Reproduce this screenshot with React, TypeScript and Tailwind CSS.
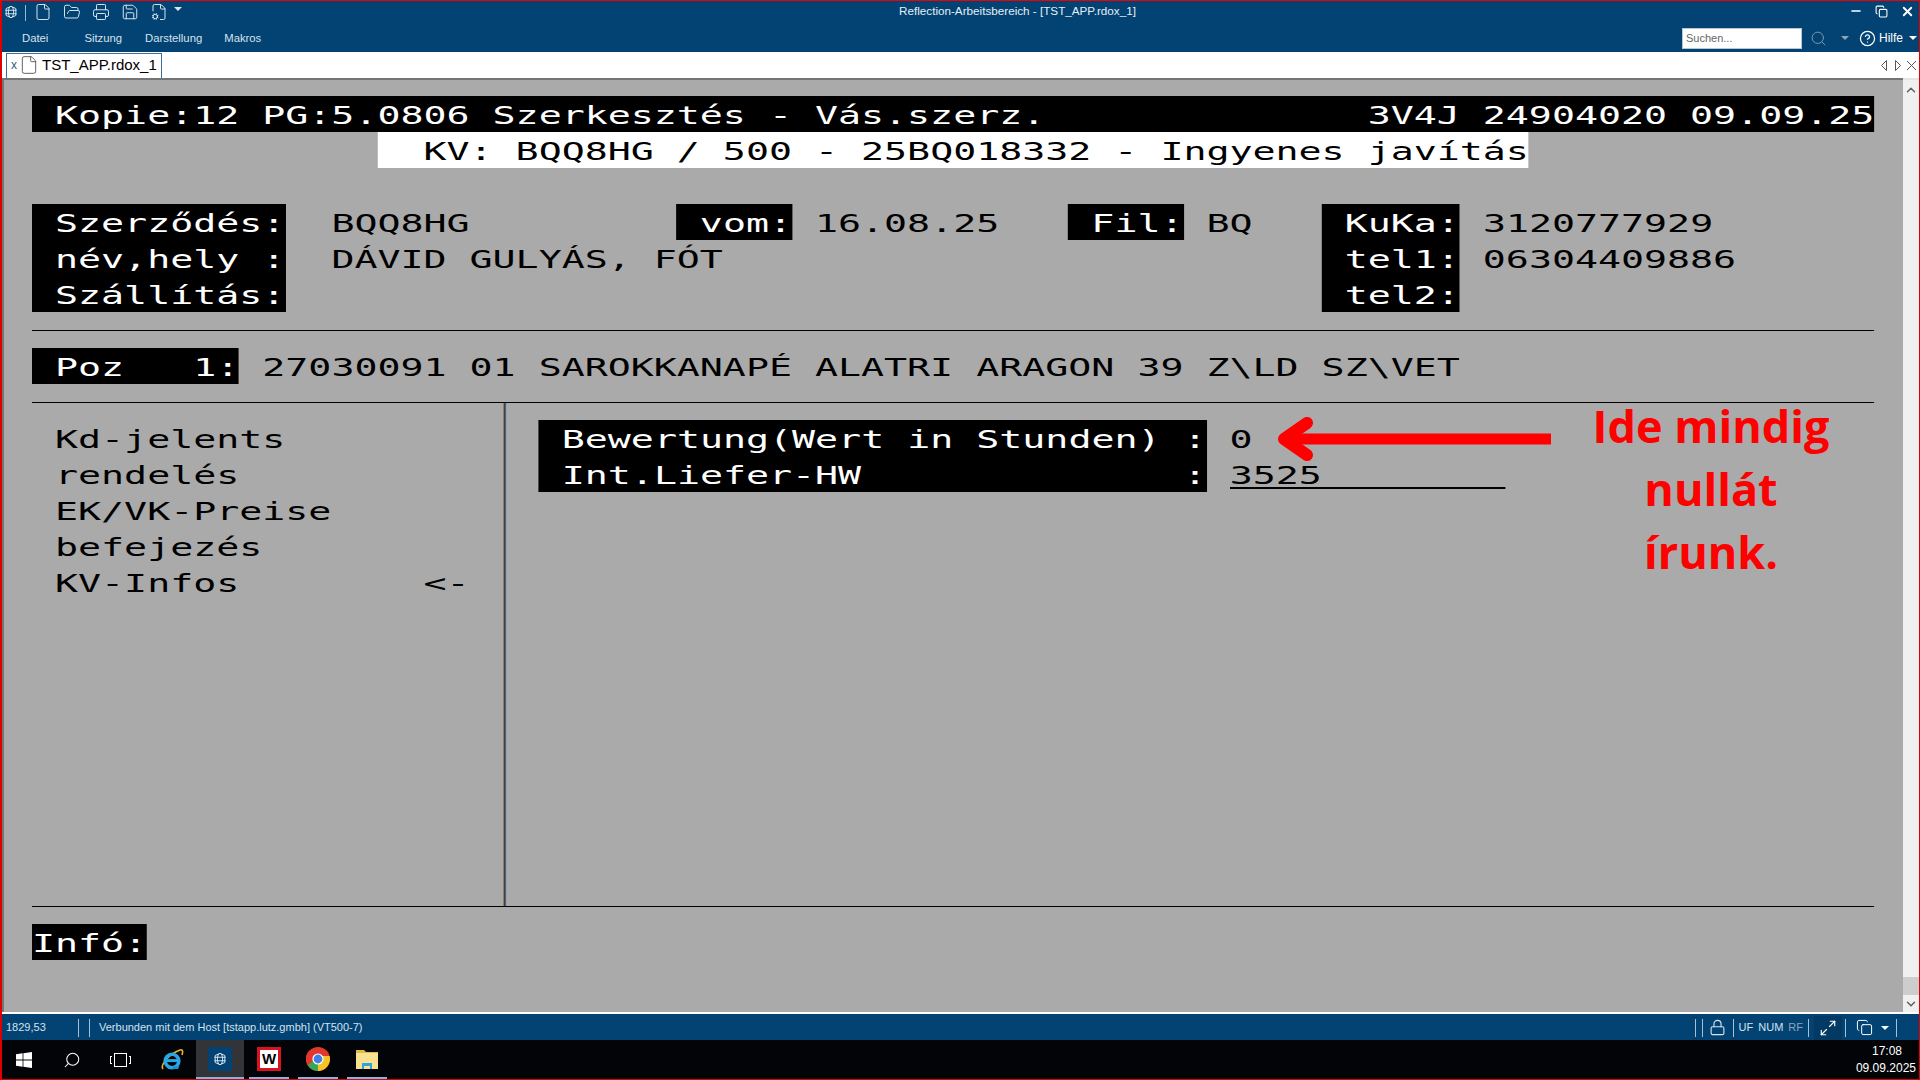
import type { ReactNode } from "react";
import { ChevronDown, ChevronUp, CircleHelp, Copy, File, FileCog, FolderOpen, Lock, Maximize2, Minus, Printer, Save, Search, X } from "lucide-react";

// one terminal line, 36px high
function Row({ children }: { children?: ReactNode }) {
  return <div className="h-9 leading-[40px] whitespace-pre">{children}</div>;
}

function Inv({ children }: { children: ReactNode }) {
  return <span className="inline-block h-9 align-top bg-black text-white">{children}</span>;
}

function Sep() {
  return <div className="h-[18px] w-px bg-[#a9c0d2]" />;
}

function Caret({ className = "" }: { className?: string }) {
  return <div className={`h-0 w-0 border-x-[4px] border-t-[4px] border-x-transparent ${className}`} />;
}

function AppIcon({ size = 14 }: { size?: number }) {
  return (
    <svg width={size} height={size} viewBox="0 0 16 16" fill="none" stroke="#dbe6ee" strokeWidth="1.1">
      <path d="M8 1.5 13.5 4v8L8 14.5 2.5 12V4Z" strokeLinejoin="round" />
      <ellipse cx="8" cy="8" rx="3" ry="6.5" />
      <path d="M1.5 6h13M1.5 10h13" />
    </svg>
  );
}

function WindowsLogo() {
  return (
    <svg width="16" height="16" viewBox="0 0 16 16" fill="#fff">
      <path d="M0 2.3 6.6 1.3v6.3H0ZM7.4 1.2 16 0v7.6H7.4ZM0 8.4h6.6v6.3L0 13.7ZM7.4 8.4H16V16l-8.6-1.2Z" />
    </svg>
  );
}

function IeLogo() {
  return (
    <svg width="24" height="24" viewBox="0 0 24 24" fill="none">
      <path d="M3 21C0 17 9 6 20 2c3-1 3 2 2 5" stroke="#e8b321" strokeWidth="1.6" />
      <circle cx="12" cy="13" r="6.8" stroke="#2aa5e6" strokeWidth="3.6" />
      <path d="M6 12.6h12.5" stroke="#2aa5e6" strokeWidth="3" />
      <path d="M13 18.5h6.5l-1.5 2.6h-6Z" fill="#1b8fd6" />
    </svg>
  );
}

function ChromeLogo() {
  return (
    <svg width="24" height="24" viewBox="0 0 24 24">
      <circle cx="12" cy="12" r="12" fill="#e0392b" />
      <path d="M12 12 1.6 18A12 12 0 0 1 2.5 4.6Z" fill="#e0392b" />
      <path d="M12 12 12 24A12 12 0 0 1 1.6 18Z" fill="#3aa757" />
      <path d="M12 24A12 12 0 0 0 23.6 9L12 9Z" fill="#f6c327" />
      <path d="M12 12 1.6 18 12 24Z" fill="#3aa757" />
      <circle cx="12" cy="12" r="5.6" fill="#fff" />
      <circle cx="12" cy="12" r="4.4" fill="#3f7fe8" />
    </svg>
  );
}

function FolderLogo() {
  return (
    <svg width="22" height="20" viewBox="0 0 22 20">
      <path d="M0 1h8l2 2h12v2H0Z" fill="#e2b84c" />
      <path d="M0 4h22v16H0Z" fill="#fbe08f" />
      <path d="M6 14h10v6h-2v-3H8v3H6Z" fill="#2ea3e3" />
    </svg>
  );
}

function Terminal() {
  return (
    <div className="w-[80ch] origin-top-left scale-x-[1.53] font-['DejaVu_Sans_Mono',monospace] text-[25px] text-black">
      <Row>
        <Inv>{" Kopie:12 PG:5.0806 Szerkesztés - Vás.szerz.".padEnd(58) + "3V4J 24904020 09.09.25"}</Inv>
      </Row>
      <Row>
        {" ".repeat(15)}
        <span className="inline-block h-9 align-top bg-white">{"  KV: BQQ8HG / 500 - 25BQ018332 - Ingyenes javítás"}</span>
      </Row>
      <Row />
      <Row>
        <Inv>{" Szerződés:"}</Inv>
        {"  " + "BQQ8HG".padEnd(15)}
        <Inv>{" vom:"}</Inv>
        {" " + "16.08.25".padEnd(11)}
        <Inv>{" Fil:"}</Inv>
        {" " + "BQ".padEnd(5)}
        <Inv>{" KuKa:"}</Inv>
        {" 3120777929"}
      </Row>
      <Row>
        <Inv>{" név,hely :"}</Inv>
        {"  " + "DÁVID GULYÁS, FÓT".padEnd(43)}
        <Inv>{" tel1:"}</Inv>
        {" 06304409886"}
      </Row>
      <Row>
        <Inv>{" Szállítás:"}</Inv>
        {" ".repeat(45)}
        <Inv>{" tel2:"}</Inv>
      </Row>
      <div className="mt-[18px] mb-[17px] h-px bg-black" />
      <Row>
        <Inv>{" Poz   1:"}</Inv>
        {" 27030091 01 SAROKKANAPÉ ALATRI ARAGON 39 Z\\LD SZ\\VET"}
      </Row>

      <div className="mt-[18px] mb-[17px] flex h-[505px] border-y border-black">
        <div className="w-[20.45ch] shrink-0 pt-[17px]">
          <Row>{" Kd-jelents"}</Row>
          <Row>{" rendelés"}</Row>
          <Row>{" EK/VK-Preise"}</Row>
          <Row>{" befejezés"}</Row>
          <Row>{" KV-Infos".padEnd(17) + "<-"}</Row>
        </div>
        <div className="w-[2.2px] shrink-0 bg-linear-to-r from-[#a08050] via-[#2a3440] to-[#6f9ac0]" />
        <div className="flex-1 pt-[17px] pl-[1.41ch]">
          <Row>
            <Inv>{" Bewertung(Wert in Stunden) :"}</Inv>
            {" 0"}
          </Row>
          <Row>
            <Inv>{" Int.Liefer-HW".padEnd(28) + ":"}</Inv>
            {" "}
            <span className="inline-block h-[33px] align-top border-b-2 border-black">{"3525".padEnd(12)}</span>
          </Row>
        </div>
      </div>

      <Row>
        <Inv>Infó:</Inv>
      </Row>
    </div>
  );
}

export default function App() {
  return (
    <div className="flex h-[1080px] w-[1920px] flex-col overflow-hidden border-t border-r border-b border-l-2 border-t-[#f00000] border-r-[#e00000] border-b-[#e00000] border-l-[#e00000] bg-white font-['Liberation_Sans',Arial,sans-serif] text-xs">
      {/* Title bar */}
      <div className="flex h-[23px] items-center bg-[#024373] text-[#dbe6ee]">
        <div className="ml-[2px] -mt-[2px] w-[14px]">
          <AppIcon />
        </div>
        <div className="ml-[7px] h-[16px] w-px bg-[#9db6c9]" />
        <div className="ml-[8px] -mt-[2px] flex items-center gap-[11px]">
          <File size={18} strokeWidth={1.3} />
          <FolderOpen size={18} strokeWidth={1.3} />
          <Printer size={18} strokeWidth={1.3} />
          <Save size={18} strokeWidth={1.3} />
          <FileCog size={18} strokeWidth={1.3} />
        </div>
        <Caret className="ml-[6px] -mt-[8px] border-t-[#dbe6ee]" />
        <div className="ml-[717px] -mt-[3px] text-[11.7px] text-[#e6eef4]">Reflection-Arbeitsbereich - [TST_APP.rdox_1]</div>
        <div className="ml-auto -mt-[3px] flex items-center gap-[12px] pr-[4px] text-white">
          <Minus size={14} strokeWidth={2.5} />
          <Copy size={13} strokeWidth={2} />
          <X size={15} strokeWidth={3} />
        </div>
      </div>

      {/* Menu row */}
      <div className="flex h-[28px] items-center bg-[#024373] text-[11.3px] text-[#d6e2ec]">
        <div className="ml-[20px] mt-[2px]">Datei</div>
        <div className="ml-[36px] mt-[1px]">Sitzung</div>
        <div className="ml-[23px] mt-[1px]">Darstellung</div>
        <div className="ml-[22px] mt-[1px]">Makros</div>
        <div className="ml-auto flex items-center pr-[2px]">
          <div className="flex h-[21px] w-[120px] items-center border border-[#b8c6d2] bg-white pl-[3px] text-[11px] text-[#666]">Suchen...</div>
          <Search size={17} strokeWidth={1.4} className="ml-[8px] text-[#7f97aa]" />
          <Caret className="ml-[14px] border-t-[#8fa5b6]" />
          <CircleHelp size={17} strokeWidth={1.8} className="ml-[10px] text-white" />
          <div className="ml-[3px] text-[12px] text-white">Hilfe</div>
          <Caret className="ml-[6px] border-t-white" />
        </div>
      </div>

      {/* Tab strip */}
      <div className="flex h-[26px] items-end bg-white">
        <div className="ml-[4px] flex h-[25px] w-[156px] items-center border-x border-t border-[#3d6f96] bg-white pb-[2px]">
          <div className="ml-[4px] text-[12px] leading-none text-[#2f5f86]">x</div>
          <File size={20} strokeWidth={1} className="ml-[2px] text-[#444]" />
          <div className="ml-[3px] text-[15px] text-black">TST_APP.rdox_1</div>
        </div>
        <div className="mb-[6px] ml-auto flex items-center pr-[2px]">
          <svg width="36" height="13" viewBox="0 0 36 13" fill="none" stroke="#555" strokeWidth="1">
            <path d="M5.5 1.5 0.5 6.5l5 5ZM14.5 1.5l5 5-5 5ZM26 2l9 9M35 2l-9 9" />
          </svg>
        </div>
      </div>

      {/* Terminal area */}
      <div className="flex min-h-0 flex-1 border-b-2 border-white">
        <div className="relative min-w-0 flex-1 overflow-hidden border-t-2 border-l-2 border-[#757575] bg-[#aaaaaa] pt-[16px] pl-[28px]">
          <Terminal />
          <svg className="absolute top-[337px] left-[1272px]" width="284" height="44" viewBox="0 0 284 44" fill="none">
            <path d="M275 22H10" stroke="#ff0000" strokeWidth="11" />
            <path d="M31 6 8 22l23 16" stroke="#ff0000" strokeWidth="12" strokeLinecap="round" strokeLinejoin="round" />
          </svg>
          <div className="absolute top-[314px] left-[1557px] w-[300px] text-center font-['Open_Sans',sans-serif] text-[45px] leading-[63px] font-bold text-[#ff0000]">
            <div>Ide mindig</div>
            <div>nullát</div>
            <div>írunk.</div>
          </div>
        </div>
        <div className="flex w-[16px] shrink-0 flex-col items-center border-t-2 border-[#e4e4e4] bg-[#f0f0f0] text-[#606060]">
          <ChevronUp size={14} strokeWidth={2.5} className="mt-[3px]" />
          <div className="mt-auto h-[18px] w-full bg-[#cdcdcd]" />
          <ChevronDown size={14} strokeWidth={2.5} className="mt-[2px] mb-[1px]" />
        </div>
      </div>

      {/* Status bar */}
      <div className="flex h-[26px] items-center bg-[#024373] pt-[1px] text-[11px] text-[#d6e2ec]">
        <div className="ml-[4px] w-[72px]">1829,53</div>
        <Sep />
        <div className="ml-[10px]">
          <Sep />
        </div>
        <div className="ml-[9px]">Verbunden mit dem Host [tstapp.lutz.gmbh] (VT500-7)</div>
        <div className="ml-auto flex items-center pr-[22px]">
          <Sep />
          <div className="ml-[6px]">
            <Sep />
          </div>
          <Lock size={17} strokeWidth={1.6} className="ml-[6px]" />
          <div className="ml-[7px]">
            <Sep />
          </div>
          <div className="ml-[5px]">UF</div>
          <div className="ml-[5px]">NUM</div>
          <div className="ml-[5px] text-[#8fa5b6]">RF</div>
          <div className="ml-[5px]">
            <Sep />
          </div>
          <div className="ml-[5px] flex h-[24px] w-[28px] items-center justify-center bg-[#033a63]">
            <Maximize2 size={18} strokeWidth={1.5} className="text-white" />
          </div>
          <div className="ml-[3px]">
            <Sep />
          </div>
          <Copy size={17} strokeWidth={1.4} className="ml-[10px] text-white" />
          <Caret className="ml-[8px] border-t-white" />
          <div className="ml-[7px]">
            <Sep />
          </div>
        </div>
      </div>

      {/* Taskbar */}
      <div className="flex h-[39px] min-h-0 items-center bg-[#020408] text-white">
        <div className="flex w-[44px] justify-center">
          <WindowsLogo />
        </div>
        <div className="ml-[2px] flex w-[48px] justify-center">
          <Search size={18} strokeWidth={1.4} className="-scale-x-100" />
        </div>
        <div className="flex w-[48px] justify-center">
          <div className="flex items-center gap-[2px]">
            <div className="h-[8px] w-[2px] border-y border-l border-white" />
            <div className="h-[14px] w-[13px] border border-white" />
            <div className="h-[8px] w-[2px] border-y border-r border-white" />
          </div>
        </div>
        <div className="flex w-[52px] justify-center pl-[3px]">
          <IeLogo />
        </div>
        <div className="flex h-full w-[48px] items-center justify-center border-b-2 border-[#76b9ed] bg-[#333437]">
          <div className="flex h-[24px] w-[24px] items-center justify-center bg-[#024373]">
            <AppIcon />
          </div>
        </div>
        <div className="ml-[5px] flex h-full w-[40px] items-center justify-center border-b-2 border-[#76b9ed]">
          <div className="flex h-[24px] w-[24px] items-center justify-center border-[3px] border-[#d8121f] bg-white text-[15px] leading-none font-bold text-black">W</div>
        </div>
        <div className="ml-[9px] flex h-full w-[40px] items-center justify-center border-b-2 border-[#76b9ed]">
          <ChromeLogo />
        </div>
        <div className="ml-[9px] flex h-full w-[40px] items-center justify-center border-b-2 border-[#76b9ed]">
          <FolderLogo />
        </div>
        <div className="ml-auto flex flex-col items-end pr-[3px] text-[12px] leading-[17px]">
          <div className="pr-[14px]">17:08</div>
          <div>09.09.2025</div>
        </div>
      </div>
    </div>
  );
}
